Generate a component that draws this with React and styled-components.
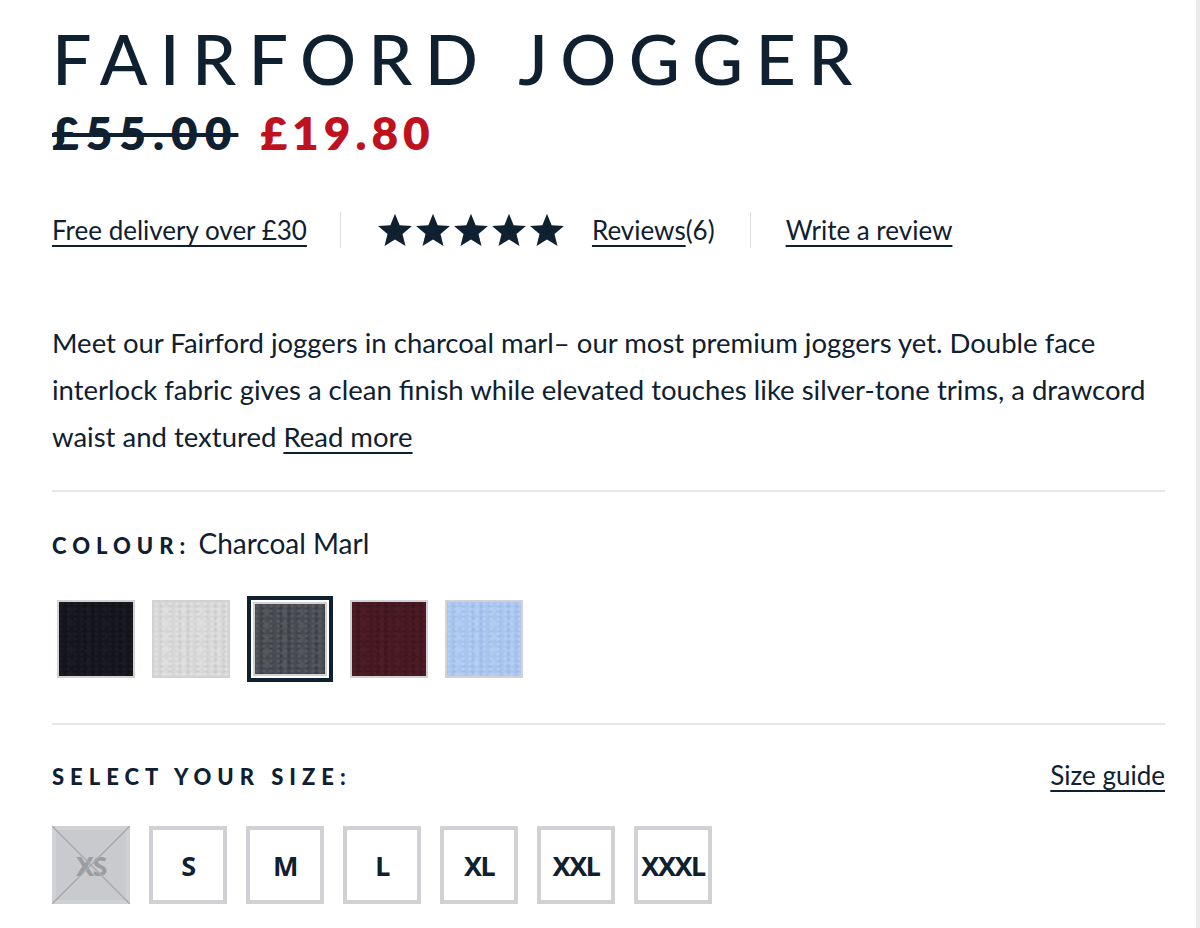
import React from 'react';
import styled, { createGlobalStyle } from 'styled-components';

const ink = '#0f2030';
const red = '#c0111f';
const rule = '#dcdde0';

const GlobalStyle = createGlobalStyle`
  html, body {
    margin: 0;
    background: #fff;
  }
  body {
    font-family: Lato, "Noto Sans", sans-serif;
    color: ${ink};
  }
`;

const Page = styled.main`
  box-sizing: border-box;
  width: 1200px;
  min-height: 928px;
  padding: 23px 31px 0 52px;
  border-right: 4px solid #ebebeb;
`;

const Title = styled.h1`
  margin: 0;
  font-size: 70px;
  line-height: 70px;
  font-weight: 500;
  letter-spacing: 12.3px;
`;

const PriceRow = styled.div`
  display: flex;
  align-items: baseline;
  gap: 22px;
  margin-top: 17px;
  font-size: 46px;
  line-height: 46px;
  font-weight: 800;
`;

const OldPrice = styled.s`
  color: ${ink};
  letter-spacing: 7px;
  text-decoration-thickness: 4px;
`;

const NowPrice = styled.span`
  color: ${red};
  letter-spacing: 5px;
`;

const InfoRow = styled.div`
  display: flex;
  align-items: center;
  margin-top: 55px;
  height: 38px;
`;

const Link = styled.a`
  color: ${ink};
  font-size: ${p => p.$size || 26}px;
  text-decoration: underline;
  text-decoration-thickness: 2px;
  text-underline-offset: 5px;
`;

const Divider = styled.span`
  width: 1px;
  height: 36px;
  background: ${rule};
  margin: 0 ${p => p.$space}px;
`;

const Stars = styled.div`
  display: flex;
  gap: 2px;
  margin-left: 3px;
  margin-right: 27px;
`;

const Count = styled.span`
  font-size: 26px;
`;

const Blurb = styled.p`
  width: 1130px;
  margin: 70px 0 0;
  font-size: 27.5px;
  line-height: 47px;
`;

const Rule = styled.hr`
  border: 0;
  height: 2px;
  background: #e6e7e9;
  margin: ${p => p.$top}px 0 0;
`;

const Label = styled.div`
  display: flex;
  align-items: baseline;
  justify-content: space-between;
  margin-top: ${p => p.$top}px;
`;

const Caps = styled.span`
  font-size: 22px;
  font-weight: 900;
  letter-spacing: 6px;
`;

const Value = styled.span`
  font-size: 28px;
  font-weight: 400;
  letter-spacing: 0;
`;

const Swatches = styled.div`
  display: flex;
  align-items: center;
  gap: 17px;
  margin-top: 36px;
  padding-left: 5px;
`;

const Swatch = styled.button`
  box-sizing: border-box;
  width: ${p => (p.$active ? 86 : 78)}px;
  height: ${p => (p.$active ? 86 : 78)}px;
  padding: 0;
  border: ${p => (p.$active ? `4px solid ${ink}` : '2px solid #d2d2d4')};
  background: ${p => (p.$active ? '#fff' : p.$fill)};
  display: grid;
  place-items: stretch;
  cursor: pointer;

  &::after {
    content: '';
    display: ${p => (p.$active ? 'block' : 'none')};
    margin: 2px;
    border: 2px solid #d2d2d4;
    background: ${p => p.$fill};
  }
`;

const Sizes = styled.div`
  display: flex;
  gap: 19px;
  margin-top: 35px;
`;

const SizeBox = styled.button`
  position: relative;
  box-sizing: border-box;
  width: 78px;
  height: 78px;
  padding: 0;
  border: 4px solid #d0d1d4;
  background: ${p => (p.$off ? '#c9cacd' : '#fff')};
  color: ${p => (p.$off ? '#9c9da0' : ink)};
  font-family: "Noto Sans", Lato, sans-serif;
  font-size: 27px;
  font-weight: 700;
  letter-spacing: -1.5px;
  display: grid;
  place-items: center;
  overflow: visible;
  white-space: nowrap;
`;

const Cross = styled.svg`
  position: absolute;
  inset: -4px;
  width: 78px;
  height: 78px;
`;

const Star = () => (
  <svg width="36" height="36" viewBox="0 0 24 24">
    <path
      fill={ink}
      d="M12 1.2l3.1 7.6 8.2.6-6.3 5.3 2 8-7-4.4-7 4.4 2-8L.7 9.4l8.2-.6z"
    />
  </svg>
);

// marl texture: fine speckle tiles over a base colour
const marl = (base, light, dark) =>
  `radial-gradient(circle at 30% 40%, ${light} 0 1px, transparent 2.5px) 0 0 / 7px 5px,
   radial-gradient(circle at 60% 50%, ${dark} 0 1px, transparent 3px) 2px 1px / 9px 6px,
   radial-gradient(circle at 50% 50%, ${light} 0 2px, transparent 5px) 3px 2px / 17px 13px,
   ${base}`;

const swatches = [
  { name: 'Black', fill: marl('#14161c', '#1a1c22', '#101217') },
  { name: 'Grey Marl', fill: marl('#d7d7d7', '#dfdfdf', '#cdcdcd') },
  { name: 'Charcoal Marl', fill: marl('#484b50', '#55585d', '#3c3f44'), active: true },
  { name: 'Burgundy', fill: marl('#461822', '#4d1d27', '#3e141d') },
  { name: 'Sky Marl', fill: marl('#a9c4ed', '#b4cdf2', '#9fbbe6') },
];

const sizes = ['XS', 'S', 'M', 'L', 'XL', 'XXL', 'XXXL'];

export default function App() {
  return (
    <>
      <GlobalStyle />
      <Page>
        <Title>FAIRFORD JOGGER</Title>
        <PriceRow>
          <OldPrice>£55.00</OldPrice>
          <NowPrice>£19.80</NowPrice>
        </PriceRow>

        <InfoRow>
          <Link href="#">Free delivery over £30</Link>
          <Divider $space={33} />
          <Stars>
            {[0, 1, 2, 3, 4].map(i => <Star key={i} />)}
          </Stars>
          <Link href="#">Reviews</Link>
          <Count>(6)</Count>
          <Divider $space={35} />
          <Link href="#">Write a review</Link>
        </InfoRow>

        <Blurb>
          Meet our Fairford joggers in charcoal marl– our most premium joggers yet. Double face
          interlock fabric gives a clean finish while elevated touches like silver-tone trims, a drawcord
          waist and textured <Link href="#" $size={27.5}>Read more</Link>
        </Blurb>

        <Rule $top={30} />

        <Label $top={34}>
          <Caps>
            COLOUR:<Value> Charcoal Marl</Value>
          </Caps>
        </Label>

        <Swatches>
          {swatches.map(s => (
            <Swatch key={s.name} $fill={s.fill} $active={s.active} aria-label={s.name} />
          ))}
        </Swatches>

        <Rule $top={41} />

        <Label $top={34}>
          <Caps>SELECT YOUR SIZE:</Caps>
          <Link href="#">Size guide</Link>
        </Label>

        <Sizes>
          {sizes.map(s => (
            <SizeBox key={s} $off={s === 'XS'}>
              {s}
              {s === 'XS' && (
                <Cross viewBox="0 0 78 78">
                  <line x1="0" y1="0" x2="78" y2="78" stroke="#a9aaad" strokeWidth="1.5" />
                  <line x1="78" y1="0" x2="0" y2="78" stroke="#a9aaad" strokeWidth="1.5" />
                </Cross>
              )}
            </SizeBox>
          ))}
        </Sizes>
      </Page>
    </>
  );
}
